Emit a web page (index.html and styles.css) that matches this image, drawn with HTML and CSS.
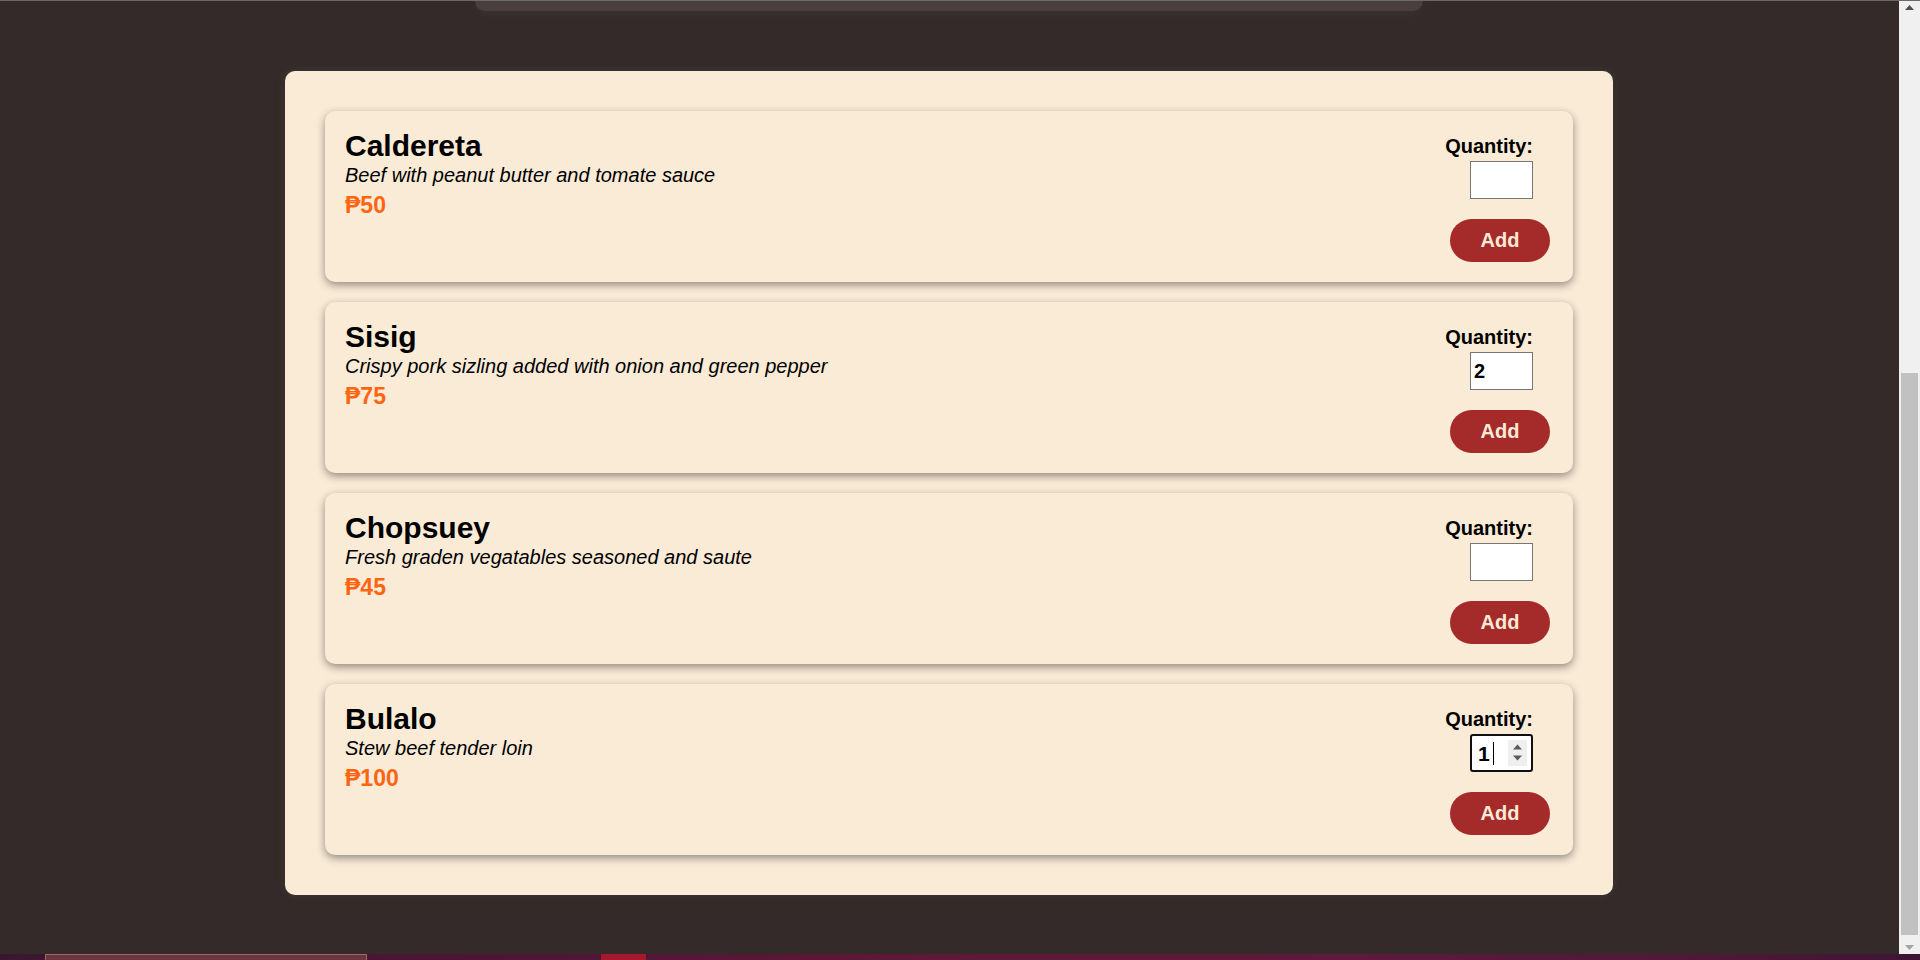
FILE: index.html
```html
<!DOCTYPE html>
<html lang="en">
<head>
<meta charset="utf-8">
<title>Menu</title>
<link rel="stylesheet" href="styles.css">
</head>
<body>
<div class="screen">
  <div class="viewport">
    <main class="page">
      <div class="header-tail"></div>
      <section class="menu">
        <article class="item">
          <div class="info">
            <h2 class="name">Caldereta</h2>
            <p class="desc">Beef with peanut butter and tomate sauce</p>
            <p class="price">₱50</p>
          </div>
          <div class="order">
            <label class="qty-label">Quantity:</label>
            <input class="qty" type="number" min="1">
            <button class="add">Add</button>
          </div>
        </article>
        <article class="item">
          <div class="info">
            <h2 class="name">Sisig</h2>
            <p class="desc">Crispy pork sizling added with onion and green pepper</p>
            <p class="price">₱75</p>
          </div>
          <div class="order">
            <label class="qty-label">Quantity:</label>
            <input class="qty" type="number" min="1" value="2">
            <button class="add">Add</button>
          </div>
        </article>
        <article class="item">
          <div class="info">
            <h2 class="name">Chopsuey</h2>
            <p class="desc">Fresh graden vegatables seasoned and saute</p>
            <p class="price">₱45</p>
          </div>
          <div class="order">
            <label class="qty-label">Quantity:</label>
            <input class="qty" type="number" min="1">
            <button class="add">Add</button>
          </div>
        </article>
        <article class="item">
          <div class="info">
            <h2 class="name">Bulalo</h2>
            <p class="desc">Stew beef tender loin</p>
            <p class="price">₱100</p>
          </div>
          <div class="order">
            <label class="qty-label">Quantity:</label>
            <div class="qty qty-focused">
              <span class="qty-val">1</span><span class="caret"></span>
              <span class="spin">
                <svg width="19" height="26" viewBox="0 0 19 26"><path d="M9.5 4.5 L14 9.5 L5 9.5 Z" fill="#5a5a5a"/><path d="M5 15.5 L14 15.5 L9.5 20.5 Z" fill="#5a5a5a"/></svg>
              </span>
            </div>
            <button class="add">Add</button>
          </div>
        </article>
      </section>
    </main>
    <div class="scrollbar">
      <svg class="sb-arrow" width="21" height="14" viewBox="0 0 21 14"><path d="M6 9 L15 9 L10.5 4 Z" fill="#505050"/></svg>
      <div class="sb-track">
        <div class="sb-thumb"></div>
      </div>
      <svg class="sb-arrow" width="21" height="14" viewBox="0 0 21 14"><path d="M6 5 L15 5 L10.5 10 Z" fill="#a3a3a3"/></svg>
    </div>
  </div>
  <div class="taskbar">
    <span class="tb-window"></span>
    <span class="tb-red"></span>
  </div>
</div>
</body>
</html>
```

FILE: styles.css
```css
html, body {
  margin: 0;
  padding: 0;
}

body {
  font-family: "Liberation Sans", Arial, sans-serif;
  background: #332a29;
}

.screen {
  width: 1920px;
  height: 960px;
  display: flex;
  flex-direction: column;
  border-top: 1px solid #6a6a6a;
  box-sizing: border-box;
  overflow: hidden;
}

.viewport {
  flex: 1;
  display: flex;
  min-height: 0;
}

.page {
  flex: 1;
  padding-right: 1px;
  background: #332a29;
  overflow: hidden;
}

.header-tail {
  width: 948px;
  height: 10px;
  margin: 0 auto;
  background: #4a3e3f;
  border-radius: 0 0 14px 14px;
  box-shadow: 0 2px 10px rgba(255, 255, 255, 0.05);
}

.menu {
  width: 1328px;
  box-sizing: border-box;
  margin: 60px auto 0;
  padding: 40px;
  background: #faebd7;
  border-radius: 10px;
  box-shadow: 0 0 12px rgba(250, 235, 215, 0.07);
  display: flex;
  flex-direction: column;
  gap: 20px;
}

.item {
  height: 171px;
  box-sizing: border-box;
  padding: 17px 23px 20px 20px;
  background: #faebd7;
  border-radius: 10px;
  box-shadow: 0 3px 8px rgba(0, 0, 0, 0.42);
  display: flex;
  justify-content: space-between;
  align-items: flex-start;
}

.info {
  display: flex;
  flex-direction: column;
}

.name {
  margin: 0;
  font-size: 30px;
  line-height: 35px;
  font-weight: bold;
  color: #000;
}

.desc {
  margin: 1px 0 0;
  font-size: 20px;
  line-height: 23px;
  font-style: italic;
  color: #000;
}

.price {
  margin: 6px 0 0;
  font-size: 23px;
  line-height: 25px;
  font-weight: bold;
  color: #ff6411;
}

.order {
  width: 100px;
  display: flex;
  flex-direction: column;
  align-items: flex-end;
}

.qty-label {
  margin: 7px 17px 0 0;
  font-size: 20px;
  line-height: 23px;
  font-weight: bold;
  color: #000;
  white-space: nowrap;
}

.qty {
  margin: 3px 17px 0 0;
  width: 63px;
  height: 38px;
  box-sizing: border-box;
  border: 1px solid #767676;
  border-radius: 0;
  padding: 0 3px;
  background: #fff;
  font-family: "Liberation Sans", Arial, sans-serif;
  font-size: 20px;
  font-weight: bold;
  color: #000;
}

.qty-focused {
  border: 2px solid #101010;
  border-radius: 3px;
  display: flex;
  align-items: center;
  padding: 0 0 0 6px;
}

.qty-val {
  line-height: 23px;
  font-size: 21px;
}

.caret {
  width: 1px;
  height: 23px;
  background: #000;
  margin-left: 3px;
}

.spin {
  margin-left: auto;
  margin-right: 4px;
  width: 19px;
  height: 26px;
  background: #efefef;
  display: flex;
}

.add {
  margin-top: 20px;
  width: 100px;
  height: 43px;
  border: none;
  border-radius: 22px;
  background: #a52a2a;
  color: #faebd7;
  font-family: "Liberation Sans", Arial, sans-serif;
  font-size: 20px;
  font-weight: bold;
  padding: 0;
}

.scrollbar {
  width: 21px;
  background: #f0f0f0;
  display: flex;
  flex-direction: column;
}

.sb-arrow {
  display: block;
  flex: none;
}

.sb-track {
  flex: 1;
  display: flex;
  flex-direction: column;
  justify-content: flex-end;
  padding: 0 2px 5px;
}

.sb-thumb {
  height: 562px;
  background: #c1c1c1;
}

.taskbar {
  height: 6px;
  flex: none;
  background: linear-gradient(90deg, #3c1630 0%, #4e1535 25%, #5c1836 45%, #5e1a3a 70%, #4e1838 90%, #3d1532 100%);
  display: flex;
  align-items: stretch;
}

.tb-window {
  margin-left: 45px;
  width: 322px;
  box-sizing: border-box;
  background: #6b363e;
  border: 1px solid #9a6a6a;
  border-bottom: none;
}

.tb-red {
  margin-left: 234px;
  width: 45px;
  background: #a5182d;
}
```
